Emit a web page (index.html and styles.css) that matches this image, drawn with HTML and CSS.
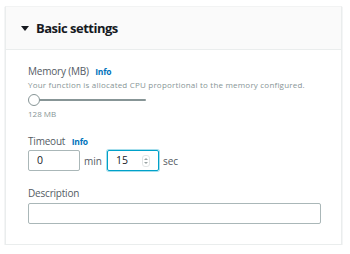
FILE: index.html
```html
<!DOCTYPE html>
<html lang="en">
<head>
    <meta charset="UTF-8">
    <title>Basic settings</title>
    <link rel="stylesheet" href="styles.css">
</head>
<body>

    <div class="panel">
        <div class="panel-header">
            <span class="caret"></span>
            <h2>Basic settings</h2>
        </div>

        <div class="panel-body">
            <div class="field">
                <div class="label">Memory (MB) <a href="#" class="info">Info</a></div>
                <div class="hint">Your function is allocated CPU proportional to the memory configured.</div>
                <div class="slider">
                    <span class="track"></span>
                    <span class="thumb"></span>
                </div>
                <div class="value">128 MB</div>
            </div>

            <div class="field">
                <div class="label">Timeout <a href="#" class="info">Info</a></div>
                <div class="timeout-row">
                    <div class="box">0</div>
                    <span class="unit">min</span>
                    <div class="box focused">
                        15
                        <span class="spinner">
                            <svg width="6" height="10" viewBox="0 0 6 10">
                                <path d="M1 4 L3 2 L5 4 Z M1 6 L3 8 L5 6 Z" fill="#9aa3a4"/>
                            </svg>
                        </span>
                    </div>
                    <span class="unit">sec</span>
                </div>
            </div>

            <div class="field">
                <div class="label">Description</div>
                <div class="box wide"></div>
            </div>
        </div>
    </div>

</body>
</html>
```

FILE: styles.css
```css
body {
    font-family: 'Open Sans', sans-serif;
    background-color: #ffffff;
    margin: 0;
    padding: 6px 8px 0 5px;
    color: #16191f;
}

.panel {
    width: 335px;
    border: 1px solid #eaeded;
    border-top-color: #f2f3f3;
    box-shadow: 0 1px 1px rgba(0, 29, 50, 0.25);
    background-color: #ffffff;
}

.panel-header {
    display: flex;
    align-items: center;
    height: 42px;
    padding-left: 15px;
    background-color: #fafafa;
    border-bottom: 1px solid #eaeded;
}

.caret {
    width: 0;
    height: 0;
    border-left: 4px solid transparent;
    border-right: 4px solid transparent;
    border-top: 5px solid #16191f;
    margin-right: 7px;
    margin-top: 1px;
}

h2 {
    margin: 0;
    font-size: 13px;
    font-weight: bold;
    letter-spacing: -0.5px;
}

.panel-body {
    padding: 15px 21px 20px 22px;
}

.field {
    margin-bottom: 16px;
}

.field:last-child {
    margin-bottom: 0;
}

.label {
    font-size: 10px;
    line-height: 12px;
    letter-spacing: -0.2px;
    color: #545b64;
}

.info {
    margin-left: 4px;
    font-size: 8.5px;
    font-weight: bold;
    color: #0073bb;
    text-decoration: none;
}

.hint {
    font-size: 8px;
    line-height: 12px;
    letter-spacing: 0.2px;
    color: #879596;
    margin-top: 1px;
}

.slider {
    position: relative;
    width: 118px;
    height: 13px;
    margin-top: 3px;
}

.track {
    position: absolute;
    left: 4px;
    right: 0;
    top: 5px;
    height: 2px;
    background-color: #879596;
    border-radius: 1px;
}

.thumb {
    position: absolute;
    left: 0;
    top: 0;
    width: 10px;
    height: 10px;
    border: 1px solid #879596;
    border-radius: 50%;
    background-color: #ffffff;
}

.value {
    font-size: 8px;
    line-height: 11px;
    color: #879596;
    margin-top: 1px;
}

.timeout-row {
    display: flex;
    align-items: center;
    margin-top: 2px;
}

.box {
    box-sizing: border-box;
    position: relative;
    width: 52px;
    height: 21px;
    padding: 0 8px;
    border: 1px solid #aab7b8;
    border-radius: 2px;
    font-size: 10.5px;
    line-height: 19px;
    color: #16191f;
}

.box.focused {
    border-color: #00a1c9;
    box-shadow: 0 0 0 1px rgba(0, 161, 201, 0.35);
}

.box.wide {
    width: 293px;
    margin-top: 4px;
}

.spinner {
    position: absolute;
    right: 8px;
    top: 4px;
    width: 6px;
    height: 10px;
    border: 1px solid #e3e6e6;
    border-radius: 3px;
    line-height: 0;
}

.unit {
    font-size: 10px;
    color: #545b64;
    margin: 0 5px 0 4px;
}
```
